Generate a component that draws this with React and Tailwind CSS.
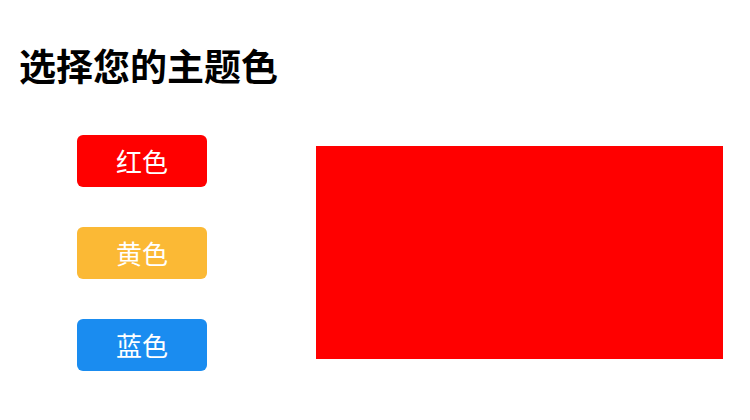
import React, { useState } from 'react';

const themes = [
  { key: 'red', label: '红色', className: 'bg-[#ff0000]', color: '#ff0000' },
  { key: 'yellow', label: '黄色', className: 'bg-[#fbb935]', color: '#fbb935' },
  { key: 'blue', label: '蓝色', className: 'bg-[#1a8cf0]', color: '#1a8cf0' },
];

const App = () => {
  const [theme, setTheme] = useState(themes[0]);

  return (
    <div
      className="min-h-[420px] bg-white px-[19px] pt-[43px]"
      style={{ fontFamily: '"Noto Sans CJK SC", "Noto Sans", sans-serif' }}
    >
      <h1 className="text-[37px] font-bold leading-[44px] text-black">选择您的主题色</h1>

      <div className="mt-[48px] flex items-start">
        {/* Theme buttons */}
        <div className="ml-[58px] flex w-[130px] flex-col gap-[40px]">
          {themes.map((t) => (
            <button
              key={t.key}
              onClick={() => setTheme(t)}
              className={`h-[52px] w-[130px] rounded-[6px] text-[26px] leading-none text-white ${t.className}`}
            >
              {t.label}
            </button>
          ))}
        </div>

        {/* Preview */}
        <div
          className="ml-[109px] mt-[11px] h-[213px] w-[407px]"
          style={{ backgroundColor: theme.color }}
        />
      </div>
    </div>
  );
};

export default App;
